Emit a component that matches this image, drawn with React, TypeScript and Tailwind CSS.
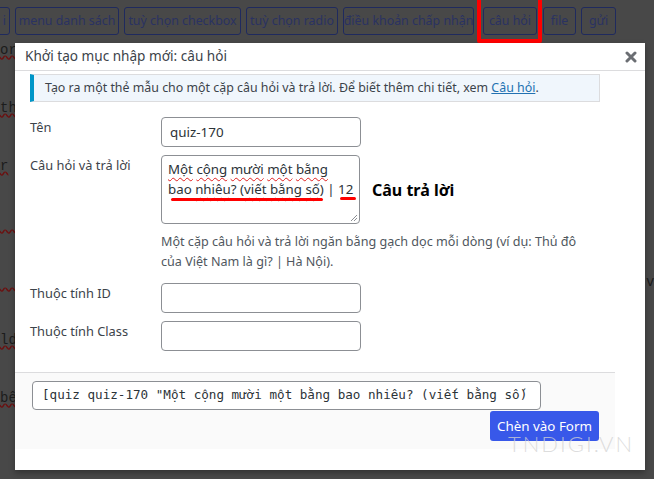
import React from 'react'

const tags = [
  { label: 'menu danh sách', w: 'w-[104px]' },
  { label: 'tuỳ chọn checkbox', w: 'w-[117px]' },
  { label: 'tuỳ chọn radio', w: 'w-[92px]' },
  { label: 'điều khoản chấp nhận', w: 'w-[131px]' },
]

const bgLines = [
  'or: placeholder "Tên của bạn" | 57077',
  '',
  'th',
  '',
  'r',
  '',
  '  "',
  '',
  '  *',
  '',
  'ld',
  '',
  'bê',
]

function Wavy({ children }: { children: React.ReactNode }) {
  return (
    <span className="underline decoration-wavy decoration-[#e02020] decoration-1 underline-offset-[3px]">
      {children}
    </span>
  )
}

export default function App() {
  return (
    <div className="relative w-[654px] h-[479px] overflow-hidden bg-[#484848] font-['Noto_Sans',sans-serif]">
      {/* page behind the overlay (already dimmed) */}
      <div className="flex gap-[5px] pt-[7px] text-[12.4px] text-[#2a3262] whitespace-nowrap">
        <div className="-ml-[41px] w-[51px] h-[28px] border border-[#1f2a5e] rounded-[3px] flex items-center justify-end pr-[3px]">
          i
        </div>
        {tags.map((t) => (
          <div
            key={t.label}
            className={`${t.w} h-[28px] border border-[#1f2a5e] rounded-[3px] flex items-center justify-center`}
          >
            {t.label}
          </div>
        ))}
        <div className="ml-[4px] w-[54px] h-[28px] border border-[#1f2a5e] rounded-[3px] flex items-center justify-center">
          câu hỏi
        </div>
        <div className="ml-[1px] w-[33px] h-[28px] border border-[#1f2a5e] rounded-[3px] flex items-center justify-center">
          file
        </div>
        <div className="w-[35px] h-[28px] border border-[#1f2a5e] rounded-[3px] flex items-center justify-center">
          gửi
        </div>
      </div>
      <div className="pt-[1px] font-['Liberation_Mono',monospace] text-[14px] leading-[29px] text-[#1c1c1c] whitespace-pre">
        {bgLines.map((l, i) => (
          <div key={i} className="h-[29px] underline decoration-wavy decoration-[#6a1010]">
            {l}
          </div>
        ))}
      </div>
      <div className="absolute left-[646px] top-[272px] font-['Liberation_Mono',monospace] text-[14px] text-[#1c1c1c]">
        v
      </div>

      {/* red annotation box around the tag button */}
      <div className="absolute left-[477px] -top-[4px] w-[65px] h-[47px] border-[4px] border-[#ff0000] rounded-[2px]" />

      {/* modal */}
      <div className="absolute left-[15px] top-[43px] w-[630px] h-[427px] bg-white shadow-[0_3px_6px_rgba(0,0,0,0.3)] text-[#3c434a]">
        <div className="h-[28px] border-b border-[#dcdcde] flex items-center justify-between pl-[10px] pr-[8px]">
          <span className="text-[13.6px]">Khởi tạo mục nhập mới: câu hỏi</span>
          <svg width="12" height="12" viewBox="0 0 12 12" className="mt-[1px]">
            <path d="M2 2 L10 10 M10 2 L2 10" stroke="#6b6e73" strokeWidth="3" strokeLinecap="round" />
          </svg>
        </div>

        <div className="w-[600px]">
          <div className="px-[15px] pt-[3px]">
            <div className="h-[28px] bg-[#f0f6fc] border border-[#dcdcde] border-l-[4px] border-l-[#0096c8] flex items-center pl-[11px] text-[12.4px] text-[#3c434a] whitespace-nowrap">
              Tạo ra một thẻ mẫu cho một cặp câu hỏi và trả lời. Để biết thêm chi tiết, xem&nbsp;
              <span className="text-[#2271b1] underline">Câu hỏi</span>.
            </div>

            <div className="grid grid-cols-[131px_1fr] mt-[15px] text-[12.8px]">
              <div className="leading-[20px]">Tên</div>
              <div className="w-[200px] h-[30px] border border-[#8c8f94] rounded-[4px] flex items-center pl-[8px] text-[13.4px] text-[#2c3338]">
                quiz-170
              </div>

              <div className="leading-[20px] mt-[8px]">Câu hỏi và trả lời</div>
              <div className="mt-[8px]">
                <div className="flex items-center gap-[12px]">
                  <div className="relative w-[199px] h-[69px] border border-[#8c8f94] rounded-[4px] px-[6px] pt-[3px] leading-[20px] text-[13.3px] text-[#2c3338] whitespace-nowrap">
                    <div>
                      <Wavy>Một</Wavy> <Wavy>cộng</Wavy> <Wavy>mười</Wavy> <Wavy>một</Wavy>{' '}
                      <Wavy>bằng</Wavy>
                    </div>
                    <div>
                      bao <Wavy>nhiêu</Wavy>? (<Wavy>viết</Wavy> <Wavy>bằng</Wavy> <Wavy>số</Wavy>) | 12
                    </div>
                    <div className="absolute left-[9px] top-[42px] w-[152px] h-[3px] rounded-full bg-[#ff0000]" />
                    <div className="absolute left-[178px] top-[41px] w-[16px] h-[3px] rounded-full bg-[#ff0000]" />
                    <svg width="8" height="8" viewBox="0 0 8 8" className="absolute right-[1px] bottom-[1px]">
                      <path d="M7 1 L1 7 M7 4 L4 7" stroke="#8c8f94" strokeWidth="1" />
                    </svg>
                  </div>
                  <span className="text-[16px] font-bold text-black">Câu trả lời</span>
                </div>
                <div className="mt-[8px] text-[12.6px] leading-[20px] text-[#50575e] whitespace-nowrap">
                  Một cặp câu hỏi và trả lời ngăn bằng gạch dọc mỗi dòng (ví dụ: Thủ đô
                  <br />
                  của Việt Nam là gì? | Hà Nội).
                </div>
              </div>

              <div className="leading-[20px] mt-[11px]">Thuộc tính ID</div>
              <div className="mt-[11px] w-[200px] h-[30px] border border-[#8c8f94] rounded-[4px]" />

              <div className="leading-[20px] mt-[8px]">Thuộc tính Class</div>
              <div className="mt-[8px] w-[200px] h-[30px] border border-[#8c8f94] rounded-[4px]" />
            </div>
          </div>

          <div className="mt-[21px] h-[77px] bg-[#fafafa] border-t border-[#dcdcde] pl-[17px] pr-[16px] pt-[8px]">
            <div className="w-[509px] h-[29px] bg-white border border-[#8c8f94] rounded-[4px] flex items-center pl-[9px]">
              <div className="whitespace-nowrap font-['DejaVu_Sans_Mono',monospace] text-[12.6px] text-[#2c3338]">
                [quiz quiz-170 "Một cộng mười một bằng bao nhiêu? (viết bằng số)
              </div>
            </div>
            <div className="flex justify-end mt-[1px]">
              <div className="w-[109px] h-[30px] bg-[#3858e9] rounded-[3px] flex items-center justify-center text-[13.4px] text-white">
                Chèn vào Form
              </div>
            </div>
          </div>
        </div>

        {/* watermark */}
        <div className="absolute left-[493px] top-[384px] font-['Lato',sans-serif] font-light text-[22px] tracking-[2px] text-[rgba(210,210,210,0.75)]">
          TNDIGI.VN
        </div>
      </div>
    </div>
  )
}
